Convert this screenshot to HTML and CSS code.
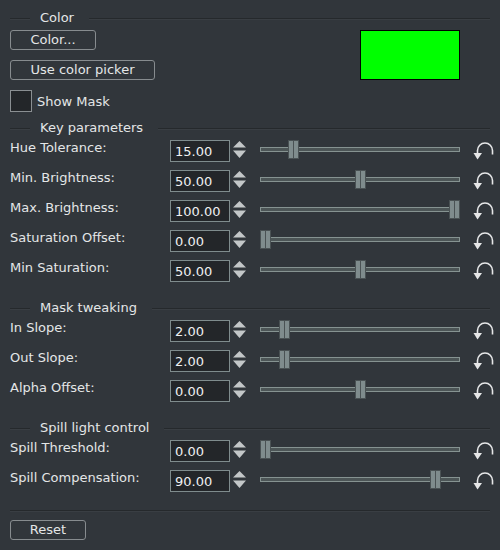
FILE: index.html
```html
<!DOCTYPE html>
<html lang="en">
<head>
  <meta charset="UTF-8">
  <title>Color key</title>
  <link rel="stylesheet" href="styles.css">
</head>
<body>
  <div class="panel">
    <div class="group-title"><span>Color</span></div>
    <div class="color-area">
      <div class="color-left">
        <button class="btn btn-color">Color...</button>
        <button class="btn btn-picker">Use color picker</button>
        <label class="check"><span class="check-box"></span>Show Mask</label>
      </div>
      <div class="swatch"></div>
    </div>

    <div class="group-title"><span>Key parameters</span></div>
    <div class="params">
      <div class="param">
        <span class="param-label">Hue Tolerance:</span>
        <input class="num" value="15.00">
        <svg class="spin" width="13" height="22" viewBox="0 0 13 22"><polygon points="0,7.5 13,7.5 6.5,1"/><polygon points="0,10.5 13,10.5 6.5,18"/></svg>
        <div class="slider"><div class="track"></div><div class="handle" style="--pos:0.15"></div></div>
        <svg class="reset" width="21" height="20" viewBox="0 0 21 20"><path d="M19.5 13.5 L19.5 9.5 A7.5 7.5 0 0 0 4.5 9.5 L4.5 12.5"/><polygon points="0.5,12 9,12 4.5,18.5"/></svg>
      </div>
      <div class="param">
        <span class="param-label">Min. Brightness:</span>
        <input class="num" value="50.00">
        <svg class="spin" width="13" height="22" viewBox="0 0 13 22"><polygon points="0,7.5 13,7.5 6.5,1"/><polygon points="0,10.5 13,10.5 6.5,18"/></svg>
        <div class="slider"><div class="track"></div><div class="handle" style="--pos:0.5"></div></div>
        <svg class="reset" width="21" height="20" viewBox="0 0 21 20"><path d="M19.5 13.5 L19.5 9.5 A7.5 7.5 0 0 0 4.5 9.5 L4.5 12.5"/><polygon points="0.5,12 9,12 4.5,18.5"/></svg>
      </div>
      <div class="param">
        <span class="param-label">Max. Brightness:</span>
        <input class="num" value="100.00">
        <svg class="spin" width="13" height="22" viewBox="0 0 13 22"><polygon points="0,7.5 13,7.5 6.5,1"/><polygon points="0,10.5 13,10.5 6.5,18"/></svg>
        <div class="slider"><div class="track"></div><div class="handle" style="--pos:1"></div></div>
        <svg class="reset" width="21" height="20" viewBox="0 0 21 20"><path d="M19.5 13.5 L19.5 9.5 A7.5 7.5 0 0 0 4.5 9.5 L4.5 12.5"/><polygon points="0.5,12 9,12 4.5,18.5"/></svg>
      </div>
      <div class="param">
        <span class="param-label">Saturation Offset:</span>
        <input class="num" value="0.00">
        <svg class="spin" width="13" height="22" viewBox="0 0 13 22"><polygon points="0,7.5 13,7.5 6.5,1"/><polygon points="0,10.5 13,10.5 6.5,18"/></svg>
        <div class="slider"><div class="track"></div><div class="handle" style="--pos:0"></div></div>
        <svg class="reset" width="21" height="20" viewBox="0 0 21 20"><path d="M19.5 13.5 L19.5 9.5 A7.5 7.5 0 0 0 4.5 9.5 L4.5 12.5"/><polygon points="0.5,12 9,12 4.5,18.5"/></svg>
      </div>
      <div class="param">
        <span class="param-label">Min Saturation:</span>
        <input class="num" value="50.00">
        <svg class="spin" width="13" height="22" viewBox="0 0 13 22"><polygon points="0,7.5 13,7.5 6.5,1"/><polygon points="0,10.5 13,10.5 6.5,18"/></svg>
        <div class="slider"><div class="track"></div><div class="handle" style="--pos:0.5"></div></div>
        <svg class="reset" width="21" height="20" viewBox="0 0 21 20"><path d="M19.5 13.5 L19.5 9.5 A7.5 7.5 0 0 0 4.5 9.5 L4.5 12.5"/><polygon points="0.5,12 9,12 4.5,18.5"/></svg>
      </div>
    </div>

    <div class="group-title later"><span>Mask tweaking</span></div>
    <div class="params">
      <div class="param">
        <span class="param-label">In Slope:</span>
        <input class="num" value="2.00">
        <svg class="spin" width="13" height="22" viewBox="0 0 13 22"><polygon points="0,7.5 13,7.5 6.5,1"/><polygon points="0,10.5 13,10.5 6.5,18"/></svg>
        <div class="slider"><div class="track"></div><div class="handle" style="--pos:0.1"></div></div>
        <svg class="reset" width="21" height="20" viewBox="0 0 21 20"><path d="M19.5 13.5 L19.5 9.5 A7.5 7.5 0 0 0 4.5 9.5 L4.5 12.5"/><polygon points="0.5,12 9,12 4.5,18.5"/></svg>
      </div>
      <div class="param">
        <span class="param-label">Out Slope:</span>
        <input class="num" value="2.00">
        <svg class="spin" width="13" height="22" viewBox="0 0 13 22"><polygon points="0,7.5 13,7.5 6.5,1"/><polygon points="0,10.5 13,10.5 6.5,18"/></svg>
        <div class="slider"><div class="track"></div><div class="handle" style="--pos:0.1"></div></div>
        <svg class="reset" width="21" height="20" viewBox="0 0 21 20"><path d="M19.5 13.5 L19.5 9.5 A7.5 7.5 0 0 0 4.5 9.5 L4.5 12.5"/><polygon points="0.5,12 9,12 4.5,18.5"/></svg>
      </div>
      <div class="param">
        <span class="param-label">Alpha Offset:</span>
        <input class="num" value="0.00">
        <svg class="spin" width="13" height="22" viewBox="0 0 13 22"><polygon points="0,7.5 13,7.5 6.5,1"/><polygon points="0,10.5 13,10.5 6.5,18"/></svg>
        <div class="slider"><div class="track"></div><div class="handle" style="--pos:0.5"></div></div>
        <svg class="reset" width="21" height="20" viewBox="0 0 21 20"><path d="M19.5 13.5 L19.5 9.5 A7.5 7.5 0 0 0 4.5 9.5 L4.5 12.5"/><polygon points="0.5,12 9,12 4.5,18.5"/></svg>
      </div>
    </div>

    <div class="group-title later"><span>Spill light control</span></div>
    <div class="params">
      <div class="param">
        <span class="param-label">Spill Threshold:</span>
        <input class="num" value="0.00">
        <svg class="spin" width="13" height="22" viewBox="0 0 13 22"><polygon points="0,7.5 13,7.5 6.5,1"/><polygon points="0,10.5 13,10.5 6.5,18"/></svg>
        <div class="slider"><div class="track"></div><div class="handle" style="--pos:0"></div></div>
        <svg class="reset" width="21" height="20" viewBox="0 0 21 20"><path d="M19.5 13.5 L19.5 9.5 A7.5 7.5 0 0 0 4.5 9.5 L4.5 12.5"/><polygon points="0.5,12 9,12 4.5,18.5"/></svg>
      </div>
      <div class="param">
        <span class="param-label">Spill Compensation:</span>
        <input class="num" value="90.00">
        <svg class="spin" width="13" height="22" viewBox="0 0 13 22"><polygon points="0,7.5 13,7.5 6.5,1"/><polygon points="0,10.5 13,10.5 6.5,18"/></svg>
        <div class="slider"><div class="track"></div><div class="handle" style="--pos:0.9"></div></div>
        <svg class="reset" width="21" height="20" viewBox="0 0 21 20"><path d="M19.5 13.5 L19.5 9.5 A7.5 7.5 0 0 0 4.5 9.5 L4.5 12.5"/><polygon points="0.5,12 9,12 4.5,18.5"/></svg>
      </div>
    </div>

    <div class="separator"></div>
    <button class="btn btn-reset">Reset</button>
  </div>
</body>
</html>
```

FILE: styles.css
```css
html, body
{
  margin:0;
  padding:0;
  background:#31363b;
}
.panel
{
  width:500px;
  height:550px;
  box-sizing:border-box;
  padding:8px 10px 0 10px;
  font-family:"DejaVu Sans", sans-serif;
  font-size:13px;
  color:#e4e6e7;
  overflow:hidden;
}
.group-title
{
  display:flex;
  align-items:center;
  height:22px;
  line-height:22px;
}
.group-title::before,
.group-title::after
{
  content:"";
  height:0;
  border-top:1px solid #25292c;
  border-bottom:1px solid #393e43;
}
.group-title::before
{
  width:20px;
}
.group-title::after
{
  flex:1;
}
.group-title span
{
  padding:0 15px 0 10px;
  position:relative;
  top:-1px;
}
.group-title.later
{
  margin-top:16px;
}
.color-area
{
  display:flex;
  justify-content:space-between;
  align-items:flex-start;
  margin-bottom:6px;
}
.color-left
{
  display:flex;
  flex-direction:column;
  align-items:flex-start;
  gap:10px;
}
.btn
{
  height:20px;
  padding:0;
  border:1px solid #878c8f;
  border-radius:3px;
  background:transparent;
  color:#e4e6e7;
  font-family:"DejaVu Sans", sans-serif;
  font-size:13px;
  line-height:18px;
  text-align:center;
}
.btn-color
{
  width:86px;
}
.btn-picker
{
  width:145px;
}
.btn-reset
{
  width:76px;
  margin-top:8px;
}
.check
{
  display:flex;
  align-items:center;
  height:22px;
}
.check-box
{
  width:22px;
  height:22px;
  box-sizing:border-box;
  border:1px solid #8a8f92;
  background:#232629;
  margin-right:5px;
}
.swatch
{
  width:100px;
  height:50px;
  box-sizing:border-box;
  border:1px solid #000;
  background:#00ff00;
  margin-right:30px;
}
.params
{
  display:flex;
  flex-direction:column;
  gap:8px;
}
.param
{
  display:flex;
  align-items:flex-start;
  height:22px;
}
.param > *
{
  flex-shrink:0;
}
.param-label
{
  width:160px;
  line-height:16px;
}
.num
{
  width:60px;
  height:22px;
  box-sizing:border-box;
  margin:0;
  padding:0 0 0 4px;
  border:1px solid #7f8c8d;
  background:#232629;
  color:#eff0f1;
  font-family:"DejaVu Sans", sans-serif;
  font-size:13px;
  line-height:20px;
  outline:none;
}
.spin
{
  margin-left:3px;
  fill:#c3c7c8;
}
.slider
{
  position:relative;
  width:200px;
  height:22px;
  margin-left:14px;
}
.track
{
  position:absolute;
  left:0;
  right:0;
  top:7px;
  height:5px;
  box-sizing:border-box;
  border:1px solid #869391;
  background:#4c5556;
}
.handle
{
  position:absolute;
  top:0;
  left:calc((100% - 11px) * var(--pos));
  width:11px;
  height:19px;
  box-sizing:border-box;
  border:1px solid #4a5254;
  background:#7f8c8d;
}
.handle::after
{
  content:"";
  position:absolute;
  left:4px;
  top:0;
  bottom:0;
  width:1px;
  background:#4a5254;
}
.reset
{
  margin-left:13px;
  margin-top:1px;
  fill:#e6e7e8;
}
.reset path
{
  fill:none;
  stroke:#e6e7e8;
  stroke-width:1.6;
}
.separator
{
  margin-top:18px;
  border-top:1px solid #25292c;
  border-bottom:1px solid #393e43;
}
```
